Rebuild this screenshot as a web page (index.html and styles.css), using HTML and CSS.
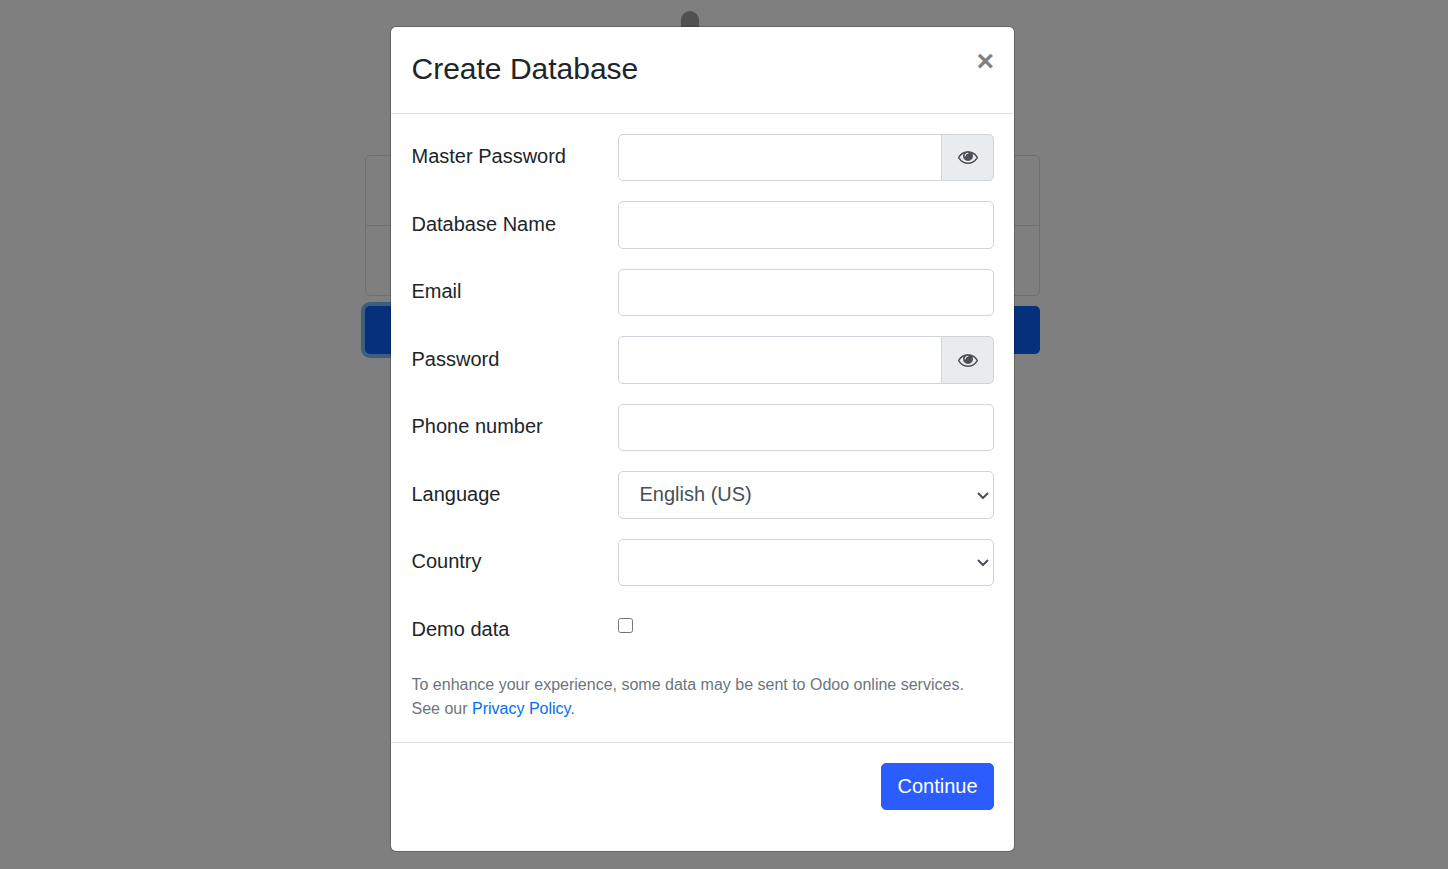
FILE: index.html
```html
<!DOCTYPE html>
<html lang="en">
<head>
<meta charset="utf-8">
<title>Create Database</title>
<link rel="stylesheet" href="styles.css">
</head>
<body>
<main class="page">
  <div class="logo"></div>
  <div class="db-list">
    <div class="db-row"></div>
    <div class="db-row"></div>
  </div>
  <div class="actions">
    <button class="action action-focus" type="button"></button>
    <button class="action" type="button"></button>
  </div>
</main>
<div class="backdrop"></div>
<section class="modal">
  <header class="modal-header">
    <h1 class="modal-title">Create Database</h1>
    <button class="close" type="button">×</button>
  </header>
  <form class="modal-body">
    <div class="field">
      <label class="label">Master Password</label>
      <div class="group">
        <input class="control control-grouped" type="password">
        <span class="addon"><svg class="eye" viewBox="0 384 1792 1152"><path fill="currentColor" d="M1664 960q-152-236-381-353 61 104 61 225 0 185-131.5 316.5t-316.5 131.5-316.5-131.5-131.5-316.5q0-121 61-225-229 117-381 353 133 205 333.5 326.5t434.5 121.5 434.5-121.5 333.5-326.5zm-720-384q0-20-14-34t-34-14q-125 0-214.5 89.5t-89.5 214.5q0 20 14 34t34 14 34-14 14-34q0-86 61-147t147-61q20 0 34-14t14-34zm848 384q0 34-20 69-140 230-376.5 368.5t-499.5 138.5-499.5-139-376.5-368q-20-35-20-69t20-69q140-229 376.5-368t499.5-139 499.5 139 376.5 368q20 35 20 69z"/></svg></span>
      </div>
    </div>
    <div class="field">
      <label class="label">Database Name</label>
      <input class="control" type="text">
    </div>
    <div class="field">
      <label class="label">Email</label>
      <input class="control" type="text">
    </div>
    <div class="field">
      <label class="label">Password</label>
      <div class="group">
        <input class="control control-grouped" type="password">
        <span class="addon"><svg class="eye" viewBox="0 384 1792 1152"><path fill="currentColor" d="M1664 960q-152-236-381-353 61 104 61 225 0 185-131.5 316.5t-316.5 131.5-316.5-131.5-131.5-316.5q0-121 61-225-229 117-381 353 133 205 333.5 326.5t434.5 121.5 434.5-121.5 333.5-326.5zm-720-384q0-20-14-34t-34-14q-125 0-214.5 89.5t-89.5 214.5q0 20 14 34t34 14 34-14 14-34q0-86 61-147t147-61q20 0 34-14t14-34zm848 384q0 34-20 69-140 230-376.5 368.5t-499.5 138.5-499.5-139-376.5-368q-20-35-20-69t20-69q140-229 376.5-368t499.5-139 499.5 139 376.5 368q20 35 20 69z"/></svg></span>
      </div>
    </div>
    <div class="field">
      <label class="label">Phone number</label>
      <input class="control" type="text">
    </div>
    <div class="field">
      <label class="label">Language</label>
      <div class="select-wrap">
        <select class="control select"><option>English (US)</option></select>
        <svg class="chevron" viewBox="0 0 12 7"><path d="M1 1l5 5 5-5" fill="none" stroke="currentColor" stroke-width="2"/></svg>
      </div>
    </div>
    <div class="field">
      <label class="label">Country</label>
      <div class="select-wrap">
        <select class="control select"><option></option></select>
        <svg class="chevron" viewBox="0 0 12 7"><path d="M1 1l5 5 5-5" fill="none" stroke="currentColor" stroke-width="2"/></svg>
      </div>
    </div>
    <div class="field field-check">
      <label class="label">Demo data</label>
      <div><input class="check" type="checkbox"></div>
    </div>
    <p class="note">To enhance your experience, some data may be sent to Odoo online services.<br>See our <a class="link" href="#">Privacy Policy</a>.</p>
  </form>
  <footer class="modal-footer">
    <button class="continue" type="button">Continue</button>
  </footer>
</section>
</body>
</html>
```
FILE: styles.css
```css
* { box-sizing: border-box; }
html, body { margin: 0; height: 100%; }
body {
  position: relative;
  background: #fff;
  font-family: "Liberation Sans", Arial, sans-serif;
  font-size: 20px;
  line-height: 1.5;
  color: #212529;
  overflow: hidden;
}
.page {
  width: 675px;
  margin-left: 365px;
  display: flex;
  flex-direction: column;
}
.logo {
  width: 18px;
  height: 60px;
  margin: 11px 0 84px 316px;
  border-radius: 9px 9px 0 0;
  background: #a0a0a0;
}
.db-list {
  border: 1px solid #dfdfdf;
  border-radius: 5px;
}
.db-row { height: 69px; }
.db-row + .db-row { border-top: 1px solid #dfdfdf; height: 70px; }
.actions {
  display: flex;
  margin-top: 10px;
}
.action {
  flex: 1;
  height: 48px;
  border: 0;
  border-radius: 5px;
  background: #0c5ef8;
  padding: 0;
}
.action-focus { box-shadow: 0 0 0 4px #7cbcfa; }
.backdrop {
  position: absolute;
  inset: 0;
  background: rgba(0, 0, 0, .5);
}
.modal {
  position: absolute;
  left: 390px;
  top: 26px;
  width: 625px;
  height: 826px;
  background: #fff;
  border: 1px solid rgba(0, 0, 0, .2);
  background-clip: padding-box;
  border-radius: 6px;
  display: flex;
  flex-direction: column;
}
.modal-header {
  display: flex;
  align-items: flex-start;
  justify-content: space-between;
  padding: 19px 20px 21.9px 20.5px;
  border-bottom: 1px solid #dee2e6;
}
.modal-title {
  margin: 0;
  font-size: 30px;
  font-weight: 400;
  line-height: 45px;
}
.close {
  margin: -20px -20px -20px auto;
  padding: 20px;
  border: 0;
  background: none;
  font: 700 30px/30px "Liberation Sans", Arial, sans-serif;
  color: #808080;
}
.modal-body {
  padding: 20px 20px 0 20.5px;
  flex: 1;
}
.field {
  display: grid;
  grid-template-columns: 206.5px 1fr;
  height: 47.5px;
  margin-bottom: 20px;
}
.field-check { height: 46.5px; }
.label { padding-top: 7.2px; }
.group { display: flex; }
.control {
  width: 100%;
  height: 47.5px;
  border: 1px solid #ced4da;
  border-radius: 5px;
  padding: 7.5px 15px;
  font: 400 20px/30px "Liberation Sans", Arial, sans-serif;
  color: #495057;
  background: #fff;
  outline: 0;
}
.control-grouped {
  flex: 1;
  width: auto;
  min-width: 0;
  border-radius: 5px 0 0 5px;
}
.addon {
  width: 53px;
  margin-left: -1px;
  display: flex;
  align-items: center;
  justify-content: center;
  background: #e9ecef;
  border: 1px solid #ced4da;
  border-radius: 0 5px 5px 0;
  color: #495057;
}
.eye { width: 20px; height: 13px; }
.select-wrap { position: relative; }
.select {
  appearance: none;
  padding: 6px 15px 9px 20.5px;
}
.chevron {
  position: absolute;
  right: 5px;
  top: 20.5px;
  width: 12px;
  height: 7px;
  color: #495057;
  pointer-events: none;
}
.check {
  width: 15px;
  height: 15px;
  margin: 11.5px 0 0;
}
.note {
  margin: 0;
  font-size: 16px;
  line-height: 24px;
  color: #6c757d;
}
.link { color: #0070f3; text-decoration: none; }
.modal-footer {
  display: flex;
  justify-content: flex-end;
  height: 109px;
  padding: 20px;
  border-top: 1px solid #dee2e6;
}
.continue {
  height: 47px;
  width: 113px;
  padding: 0 0 1px;
  border: 1px solid #2a5cff;
  border-radius: 5px;
  background: #2a5cff;
  color: #fff;
  font: 400 20px/30px "Liberation Sans", Arial, sans-serif;
}
```
